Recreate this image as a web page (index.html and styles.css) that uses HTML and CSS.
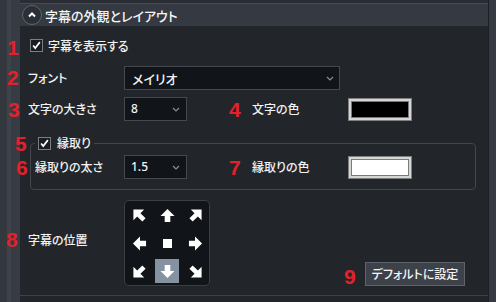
FILE: index.html
```html
<!DOCTYPE html>
<html lang="ja">
<head>
<meta charset="utf-8">
<title>字幕の外観とレイアウト</title>
<link rel="stylesheet" href="styles.css">
</head>
<body>
<div class="app">
  <div class="gutter"></div>
  <div class="panel">
    <div class="panel-top"></div>
    <div class="header">
      <span class="collapse">
        <svg viewBox="0 0 12 12" width="12" height="12"><polyline points="3,7.5 6,4.5 9,7.5" fill="none" stroke="#ffffff" stroke-width="2"/></svg>
      </span>
      <span class="title">字幕の外観とレイアウト</span>
    </div>
    <div class="content">
      <div class="check-row">
        <span class="checkbox"><svg viewBox="0 0 13 13" width="11" height="11"><polyline points="2.5,6.5 5,9.5 10.5,2.5" fill="none" stroke="#ffffff" stroke-width="2"/></svg></span>
        <span class="text">字幕を表示する</span>
      </div>
      <div class="row">
        <span class="label">フォント</span>
        <div class="select wide"><span class="value">メイリオ</span><svg class="chev" viewBox="0 0 8 5" width="8" height="5"><polyline points="1,1 4,4 7,1" fill="none" stroke="#8a8f96" stroke-width="1.2"/></svg></div>
      </div>
      <div class="row gap-sm">
        <span class="label">文字の大きさ</span>
        <div class="select small"><span class="value num">8</span><svg class="chev" viewBox="0 0 8 5" width="8" height="5"><polyline points="1,1 4,4 7,1" fill="none" stroke="#8a8f96" stroke-width="1.2"/></svg></div>
        <span class="label">文字の色</span>
        <span class="swatch black"></span>
      </div>
      <fieldset class="group">
        <legend class="legend">
          <span class="checkbox"><svg viewBox="0 0 13 13" width="11" height="11"><polyline points="2.5,6.5 5,9.5 10.5,2.5" fill="none" stroke="#ffffff" stroke-width="2"/></svg></span>
          <span class="text">縁取り</span>
        </legend>
        <div class="row inner">
          <span class="label">縁取りの太さ</span>
          <div class="select small"><span class="value num">1.5</span><svg class="chev" viewBox="0 0 8 5" width="8" height="5"><polyline points="1,1 4,4 7,1" fill="none" stroke="#8a8f96" stroke-width="1.2"/></svg></div>
          <span class="label">縁取りの色</span>
          <span class="swatch white"></span>
        </div>
      </fieldset>
      <div class="position-row">
        <span class="label pos-label">字幕の位置</span>
        <div class="pad">
          <span class="cell"><svg class="arrow" viewBox="0 0 16 16"><path d="M1.5 1.5 L13 1.5 L9 5.5 L14.5 11 L11 14.5 L5.5 9 L1.5 13 Z" fill="#fff"/></svg></span>
          <span class="cell"><svg class="arrow" viewBox="0 0 16 16"><path d="M8 1 L15.5 8.5 L11 8.5 L11 15 L5 15 L5 8.5 L0.5 8.5 Z" fill="#fff"/></svg></span>
          <span class="cell"><svg class="arrow r90" viewBox="0 0 16 16"><path d="M1.5 1.5 L13 1.5 L9 5.5 L14.5 11 L11 14.5 L5.5 9 L1.5 13 Z" fill="#fff"/></svg></span>
          <span class="cell"><svg class="arrow r270" viewBox="0 0 16 16"><path d="M8 1 L15.5 8.5 L11 8.5 L11 15 L5 15 L5 8.5 L0.5 8.5 Z" fill="#fff"/></svg></span>
          <span class="cell"><span class="dot"></span></span>
          <span class="cell"><svg class="arrow r90" viewBox="0 0 16 16"><path d="M8 1 L15.5 8.5 L11 8.5 L11 15 L5 15 L5 8.5 L0.5 8.5 Z" fill="#fff"/></svg></span>
          <span class="cell"><svg class="arrow r270" viewBox="0 0 16 16"><path d="M1.5 1.5 L13 1.5 L9 5.5 L14.5 11 L11 14.5 L5.5 9 L1.5 13 Z" fill="#fff"/></svg></span>
          <span class="cell selected"><svg class="arrow r180" viewBox="0 0 16 16"><path d="M8 1 L15.5 8.5 L11 8.5 L11 15 L5 15 L5 8.5 L0.5 8.5 Z" fill="#fff"/></svg></span>
          <span class="cell"><svg class="arrow r180" viewBox="0 0 16 16"><path d="M1.5 1.5 L13 1.5 L9 5.5 L14.5 11 L11 14.5 L5.5 9 L1.5 13 Z" fill="#fff"/></svg></span>
        </div>
        <button class="btn" type="button">デフォルトに設定</button>
      </div>
    </div>
    <div class="panel-foot"></div>
  </div>
  <div class="scrollbar"></div>

  <span class="mark m1">1</span>
  <span class="mark m2">2</span>
  <span class="mark m3">3</span>
  <span class="mark m4">4</span>
  <span class="mark m5">5</span>
  <span class="mark m6">6</span>
  <span class="mark m7">7</span>
  <span class="mark m8">8</span>
  <span class="mark m9">9</span>
</div>
</body>
</html>
```
FILE: styles.css
```css
* { box-sizing: border-box; }
html, body { margin: 0; padding: 0; background: #22262b; }
body {
  font-family: "Noto Sans CJK JP", "Noto Sans", sans-serif;
  font-feature-settings: "palt";
  font-weight: 500;
  color: #f2f2f2;
  font-size: 12px;
}
.app {
  position: relative;
  display: flex;
  width: 496px;
  height: 302px;
  overflow: hidden;
}
.gutter {
  width: 20px;
  flex: none;
  background: linear-gradient(to right, #33373e 0, #33373e 7px, #3e424a 7px, #3e424a 11px, #373b43 11px, #373b43 20px);
}
.panel {
  width: 468px;
  flex: none;
  display: flex;
  flex-direction: column;
  background: #22262b;
}
.panel-top { height: 3px; background: #2a2e34; flex: none; }
.header {
  height: 23px;
  flex: none;
  border-top: 1px solid #474c54;
  background: #353941;
  display: flex;
  align-items: center;
  padding-left: 2px;
}
.collapse {
  width: 20px;
  height: 20px;
  border-radius: 50%;
  border: 1.5px solid #5f656d;
  background: #2b2f36;
  display: flex;
  align-items: center;
  justify-content: center;
}
.collapse svg { display: block; }
.title {
  margin-left: 3px;
  font-size: 13px;
  color: #f6f6f6;
  line-height: 1;
}
.content {
  flex: 1;
  padding: 7px 0 0 8px;
  display: flex;
  flex-direction: column;
}
.check-row {
  height: 24px;
  display: flex;
  align-items: center;
  margin-left: 2px;
}
.checkbox {
  width: 13px;
  height: 13px;
  border: 1px solid #7a7f86;
  background: #1a1d21;
  display: flex;
  align-items: center;
  justify-content: center;
  flex: none;
}
.checkbox svg { display: block; }
.check-row .text { margin-left: 5px; }
.row {
  height: 24px;
  margin-top: 9px;
  display: grid;
  grid-template-columns: 96px 128px 96px auto;
  align-items: center;
}
.row.gap-sm { margin-top: 7px; }
.row.inner {
  margin-top: 5px;
  grid-template-columns: 89px 128px 96px auto;
}
.label { line-height: 1; white-space: nowrap; }
.select {
  height: 24px;
  background: #111418;
  border: 1px solid #45494f;
  display: flex;
  align-items: center;
  justify-content: space-between;
  padding: 0 6px 0 6px;
}
.select.wide { width: 216px; padding-left: 7px; padding-right: 5px; }
.select.small { width: 63px; }
.select .value { font-size: 13px; line-height: 1; }
.select .value.num { font-family: "Noto Sans", sans-serif; font-size: 12px; }
.chev { display: block; }
.swatch {
  width: 62px;
  height: 21px;
  margin-left: 1px;
  border: 2px solid #d6d6d6;
  outline: 1px solid #7f7f7f;
  box-shadow: inset 0 0 0 1px #7a7a7a;
}
.swatch.black { background: #000; }
.swatch.white { background: #fff; }
.group {
  margin: 15px 0 0 2px;
  width: 446px;
  min-width: 0;
  border: 1px solid #42464d;
  border-radius: 4px;
  padding: 0 4px 10px 4px;
}
.legend {
  height: 14px;
  padding: 0 3px;
  display: flex;
  align-items: center;
}
.legend .text { margin-left: 6px; line-height: 1; }
.position-row {
  margin-top: 10px;
  height: 86px;
  display: grid;
  grid-template-columns: 96px 86px 1fr auto;
}
.pos-label { align-self: center; margin-bottom: 6px; }
.pad {
  width: 86px;
  height: 86px;
  border: 1px solid #3a3e45;
  border-radius: 5px;
  background: #111418;
  padding: 2px;
  display: grid;
  grid-template-columns: repeat(3, 24px);
  grid-template-rows: repeat(3, 24px);
  gap: 4px;
  justify-content: center;
  align-content: center;
}
.cell {
  display: flex;
  align-items: center;
  justify-content: center;
}
.cell.selected { background: #8592a2; }
.arrow { width: 15px; height: 15px; display: block; }
.r90 { transform: rotate(90deg); }
.r180 { transform: rotate(180deg); }
.r270 { transform: rotate(270deg); }
.dot { width: 9px; height: 9px; background: #fff; display: block; }
.btn {
  grid-column: 4;
  align-self: end;
  margin-right: 23px;
  width: 100px;
  height: 24px;
  background: #3d424a;
  border: 1px solid #5d636b;
  color: #f4f4f4;
  font-family: "Noto Sans CJK JP", "Noto Sans", sans-serif;
  font-feature-settings: "palt";
  font-weight: 500;
  font-size: 12px;
  padding: 0;
  line-height: 1;
}
.panel-foot {
  height: 7px;
  flex: none;
  border-top: 1px solid #3d4249;
  background: #22262b;
}
.scrollbar {
  width: 8px;
  flex: none;
  border-left: 1px solid #1c1f23;
  background: #363a42;
}
.mark {
  position: absolute;
  font-family: "Liberation Sans", Arial, sans-serif;
  font-weight: bold;
  font-size: 21px;
  line-height: 21px;
  color: #e3212b;
}
.m1 { left: 7px; top: 37px; }
.m2 { left: 7px; top: 67px; }
.m3 { left: 8px; top: 99px; }
.m4 { left: 229px; top: 99px; }
.m5 { left: 15px; top: 133px; }
.m6 { left: 16px; top: 157px; }
.m7 { left: 229px; top: 157px; }
.m8 { left: 6px; top: 229px; }
.m9 { left: 344px; top: 266px; }
```
